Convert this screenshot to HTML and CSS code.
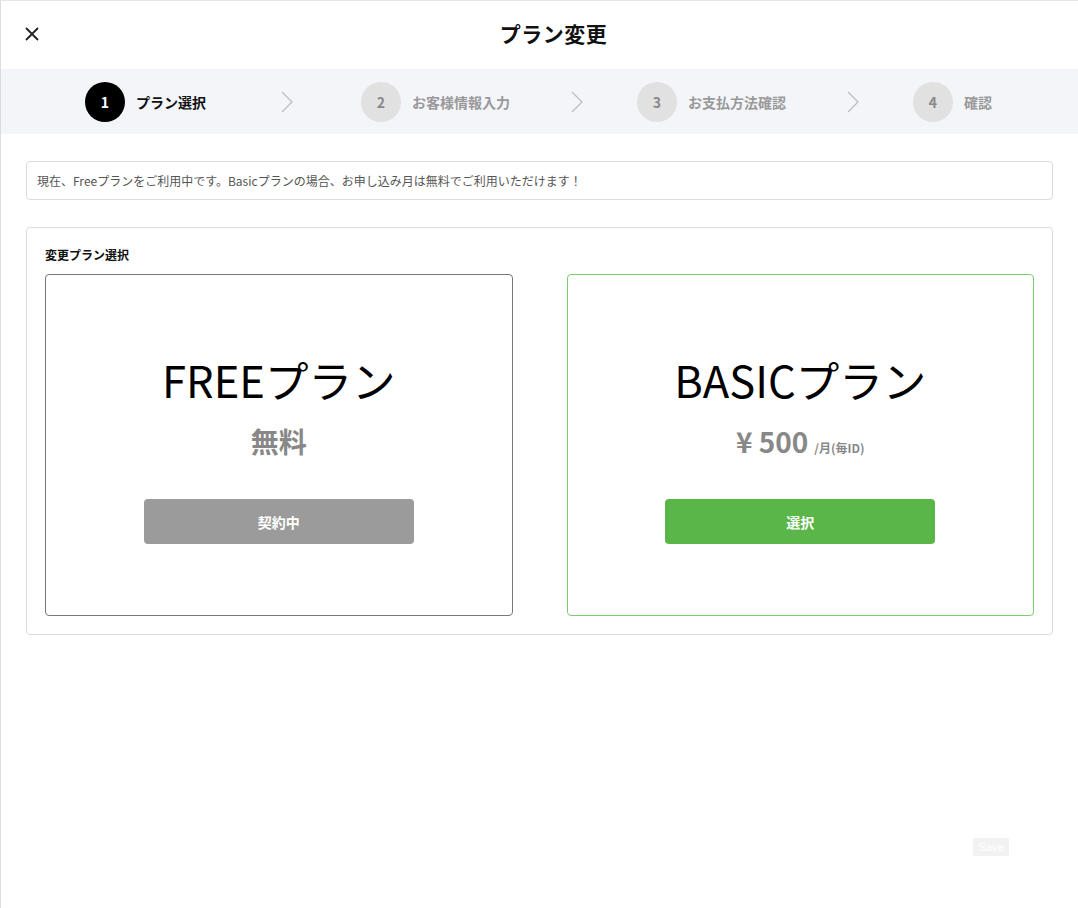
FILE: index.html
```html
<!DOCTYPE html>
<html lang="ja">
<head>
<meta charset="utf-8">
<title>プラン変更</title>
<link rel="stylesheet" href="styles.css">
</head>
<body>
<div class="page">
  <header class="header">
    <button class="close" aria-label="close">
      <svg width="16" height="16" viewBox="0 0 16 16"><path d="M2 2 L14 14 M14 2 L2 14" stroke="#222" stroke-width="1.8" fill="none"/></svg>
    </button>
    <h1 class="title">プラン変更</h1>
  </header>
  <nav class="stepper">
    <div class="step active">
      <span class="num">1</span><span class="label">プラン選択</span>
      <span class="chev-wrap"><svg class="chev" width="12" height="22" viewBox="0 0 12 22"><path d="M1 1 L11 11 L1 21" stroke="#bbb" stroke-width="1.2" fill="none"/></svg></span>
    </div>
    <div class="step">
      <span class="num">2</span><span class="label">お客様情報入力</span>
      <span class="chev-wrap"><svg class="chev" width="12" height="22" viewBox="0 0 12 22"><path d="M1 1 L11 11 L1 21" stroke="#bbb" stroke-width="1.2" fill="none"/></svg></span>
    </div>
    <div class="step">
      <span class="num">3</span><span class="label">お支払方法確認</span>
      <span class="chev-wrap"><svg class="chev" width="12" height="22" viewBox="0 0 12 22"><path d="M1 1 L11 11 L1 21" stroke="#bbb" stroke-width="1.2" fill="none"/></svg></span>
    </div>
    <div class="step last">
      <span class="num">4</span><span class="label">確認</span>
    </div>
  </nav>
  <main class="content">
    <div class="notice">現在、Freeプランをご利用中です。Basicプランの場合、お申し込み月は無料でご利用いただけます！</div>
    <section class="panel">
      <h2 class="panel-title">変更プラン選択</h2>
      <div class="cards">
        <div class="card current">
          <div class="plan-name">FREEプラン</div>
          <div class="price">無料</div>
          <button class="btn btn-gray">契約中</button>
        </div>
        <div class="card selectable">
          <div class="plan-name">BASICプラン</div>
          <div class="price">¥ 500 <span class="unit">/月(毎ID)</span></div>
          <button class="btn btn-green">選択</button>
        </div>
      </div>
    </section>
    <div class="save-row"><button class="save">Save</button></div>
  </main>
</div>
</body>
</html>
```
FILE: styles.css
```css
* { box-sizing: border-box; }
html, body { margin: 0; padding: 0; }
body {
  font-family: "Noto Sans CJK JP", "Noto Sans", sans-serif;
  color: #111;
  background: #fff;
}
.page {
  width: 1078px;
  height: 908px;
  border-left: 1px solid #ddd;
  border-top: 1px solid #e6e6e6;
  overflow: hidden;
}
.header {
  height: 68px;
  display: flex;
  align-items: center;
  justify-content: center;
  padding-left: 28px;
  padding-bottom: 4px;
  position: relative;
}
.close {
  position: absolute;
  left: 22px;
  top: 24px;
  background: none;
  border: 0;
  padding: 0;
  width: 18px;
  height: 18px;
  display: flex;
  align-items: center;
  justify-content: center;
}
.title {
  margin: 0;
  font-size: 21px;
  font-weight: 700;
  letter-spacing: 0.5px;
}
.stepper {
  height: 65px;
  background: #f4f5f9;
  display: flex;
  align-items: center;
  padding-left: 84px;
}
.step {
  width: 276px;
  display: flex;
  align-items: center;
  flex-shrink: 0;
}
.step.last { width: auto; }
.num {
  width: 40px;
  height: 40px;
  border-radius: 50%;
  background: #e1e1e1;
  color: #888;
  font-size: 14px;
  font-weight: 700;
  display: flex;
  align-items: center;
  justify-content: center;
  flex-shrink: 0;
}
.label {
  margin-left: 11px;
  font-size: 14px;
  font-weight: 700;
  color: #999;
}
.step.active .num { background: #000; color: #fff; }
.step.active .label { color: #111; }
.chev-wrap {
  flex: 1;
  display: flex;
  justify-content: center;
  padding-left: 6px;
}
.chev { display: block; }
.content {
  padding: 27px 25px 0 25px;
}
.notice {
  border: 1px solid #dcdcdc;
  border-radius: 4px;
  height: 39px;
  display: flex;
  align-items: center;
  padding-left: 10px;
  font-size: 12px;
  color: #555;
}
.panel {
  margin-top: 27px;
  border: 1px solid #dcdcdc;
  border-radius: 4px;
  padding: 18px 18px 18px 18px;
}
.panel-title {
  margin: 0 0 10px 0;
  font-size: 12px;
  font-weight: 700;
  line-height: 18px;
}
.cards {
  display: flex;
  gap: 54px;
}
.card {
  flex: 1;
  height: 342px;
  border: 1px solid #777;
  border-radius: 4px;
  display: flex;
  flex-direction: column;
  align-items: center;
  padding-top: 72px;
}
.card.selectable { border-color: #7dcc70; }
.plan-name {
  font-size: 43.5px;
  line-height: 66px;
  font-weight: 400;
  color: #000;
}
.price {
  margin-top: 11px;
  height: 34px;
  font-size: 28px;
  font-weight: 700;
  color: #888;
  line-height: 34px;
  display: flex;
  align-items: baseline;
}
.unit {
  font-size: 12px;
  line-height: 12px;
  margin-left: 6px;
}
.btn {
  margin-top: 41px;
  width: 270px;
  height: 45px;
  border: 0;
  border-radius: 4px;
  color: #fff;
  font-family: inherit;
  font-size: 14px;
  font-weight: 700;
}
.btn-gray { background: #9b9b9b; }
.btn-green { background: #5ab648; }
.save-row {
  display: flex;
  justify-content: flex-end;
  padding-right: 44px;
  margin-top: 203px;
}
.save {
  width: 36px;
  height: 18px;
  border: 0;
  padding: 0;
  background: #f2f2f2;
  color: #fff;
  font-family: "Liberation Sans", sans-serif;
  font-size: 11px;
}
```
